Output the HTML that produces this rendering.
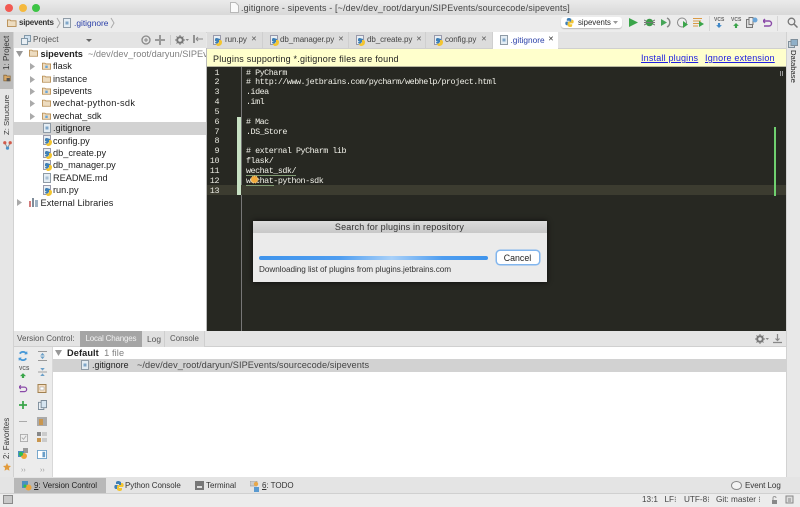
<!DOCTYPE html>
<html><head><meta charset="utf-8"><style>
html,body{margin:0;padding:0;width:800px;height:507px;overflow:hidden;background:#e8e8e8}
#r{position:relative;width:800px;height:507px;overflow:hidden;font:8.7px "Liberation Sans",sans-serif;color:#2c2c2c;filter:blur(.3px)}
#r div,#r svg{position:absolute}
.t{white-space:nowrap;line-height:12px}
.m{font-family:"Liberation Mono",monospace;font-size:8.4px;letter-spacing:-.48px;color:#f2f2ea;white-space:pre;line-height:10px}
.n{font-family:"Liberation Mono",monospace;font-size:8.4px;letter-spacing:-.48px;color:#e8e8e0;width:12px;text-align:right;left:207px;line-height:10px}
.tree{font-size:9.2px;color:#222}
.tab{top:32px;height:16px;background:#dcdcdc;border-right:1px solid #cfcfcf}
.x{font-size:7px;color:#555}
.tt{font-size:8px;color:#444;letter-spacing:-.08px}
.v{writing-mode:vertical-rl;transform:rotate(180deg);white-space:nowrap;font-size:8.1px;color:#333;line-height:11px;width:11px;left:1px}
.bb{font-size:8px;color:#333;top:479.500px;letter-spacing:-.03px}
.st{font-size:8.2px;color:#444;top:494px}
</style></head><body><div id="r">
<!-- title -->
<div style="left:0;top:0;width:800px;height:15px;background:linear-gradient(#ebebeb,#d8d8d8)"></div>
<div style="left:5px;top:3.500px;width:8px;height:8px;border-radius:50%;background:#f25a52"></div>
<div style="left:18.500px;top:3.500px;width:8px;height:8px;border-radius:50%;background:#f5b93d"></div>
<div style="left:32px;top:3.500px;width:8px;height:8px;border-radius:50%;background:#3dc445"></div>
<svg style="left:230px;top:2px" width="9" height="11"><path d="M.5.5h5l3 3v7h-8z" fill="#fafafa" stroke="#b8b8b8"/></svg>
<div class="t" style="left:241px;top:2px;color:#444;font-size:8.900px;letter-spacing:.17px">.gitignore - sipevents - [~/dev/dev_root/daryun/SIPEvents/sourcecode/sipevents]</div>
<!-- nav bar -->
<div style="left:0;top:15px;width:800px;height:17px;background:#ececec;border-bottom:1px solid #d4d4d4"></div>
<svg style="left:7px;top:19px" width="9.500" height="8" viewBox="0 0 11 9"><path d="M.5 1h3l1 1h6v6.500h-10z" fill="#eddcc0" stroke="#b58a4e"/></svg>
<div class="t" style="left:19px;top:17px;font-weight:bold;font-size:8px;letter-spacing:-.25px;color:#333">sipevents</div>
<svg style="left:55.500px;top:17px" width="5" height="12"><path d="M1 1l3 5-3 5" fill="none" stroke="#aaa"/></svg>
<svg style="left:63px;top:18px" width="8" height="10"><path d="M.5.5h7v9h-7z" fill="#e4edf4" stroke="#8f9ba6"/><path d="M2.500 3.500h3v3h-3z" fill="#7fa6c9"/></svg>
<div class="t" style="left:74px;top:17px;color:#2a3fa8;font-size:8.400px">.gitignore</div>
<svg style="left:110px;top:17px" width="5" height="12"><path d="M1 1l3 5-3 5" fill="none" stroke="#aaa"/></svg>
<div style="left:561px;top:17px;width:61px;height:11px;background:#fff;border-radius:3px;box-shadow:0 1px 1px #bbb"></div>
<svg style="left:565px;top:18px" width="9" height="9" viewBox="0 0 10 10"><path d="M5 0c-3 0-3 1-3 2v1h3v1H1c-1 1-1 4 1 4h1V6h3l1-1V1z" fill="#3f7fb5"/><path d="M5 10c3 0 3-1 3-2V7H5V6h4c1-1 1-4-1-4H7v2H4L3 5v4z" fill="#f3c531"/></svg>
<div class="t" style="left:578px;top:17px;font-size:7.800px">sipevents</div>
<svg style="left:613px;top:21px" width="5" height="3"><path d="M0 0h5L2.500 3z" fill="#999"/></svg>
<svg style="left:629px;top:18px" width="9" height="9"><path d="M0 0l9 4.500-9 4.500z" fill="#3aa54a"/></svg>
<svg style="left:644px;top:17px" width="11" height="11"><circle cx="5.500" cy="5.500" r="3.800" fill="#3d9a4a"/><path d="M0 3l2 1M0 8l2-1M11 3L9 4M11 8L9 7M0 5.500h11" stroke="#777"/></svg>
<svg style="left:660px;top:17px" width="11" height="11"><path d="M1 2l6 3.500-6 3.500z" fill="#46a558"/><path d="M7 1a5 5 0 0 1 0 9" stroke="#888" fill="none" stroke-width="1.500"/></svg>
<svg style="left:677px;top:17px" width="11" height="12"><circle cx="5" cy="5.500" r="4.500" fill="#eee" stroke="#888"/><path d="M6 4l5 3.500-5 3.500z" fill="#3aa54a"/></svg>
<svg style="left:693px;top:18px" width="11" height="9"><path d="M0 .5h9M0 3h8M0 5.500h6M0 8h5" stroke="#d99a45"/><path d="M6 3l5 3-5 3z" fill="#3aa54a"/></svg>
<div style="left:709px;top:16px;width:1px;height:15px;background:#d6d6d6"></div>
<div class="t" style="left:714px;top:14px;font-size:5px;font-weight:bold;color:#666">VCS</div>
<svg style="left:716px;top:23px" width="6" height="5" viewBox="0 0 8 7"><path d="M2.500 0h3v3H8L4 7 0 3h2.500z" fill="#3f88c8"/></svg>
<div class="t" style="left:731px;top:14px;font-size:5px;font-weight:bold;color:#666">VCS</div>
<svg style="left:733px;top:23px" width="6" height="5" viewBox="0 0 8 7"><path d="M2.500 7h3V4H8L4 0 0 4h2.500z" fill="#3aa54a"/></svg>
<svg style="left:746px;top:17px" width="12" height="11"><path d="M.5 2.500h6v8h-6z" fill="#ddd" stroke="#777"/><path d="M3 .5h4v7H3z" fill="#eee" stroke="#777"/><circle cx="9" cy="3" r="2.500" fill="#6aa5d8"/></svg>
<svg style="left:763px;top:18px" width="10" height="9"><path d="M2 1L0 3l2 2M0 3h6a2.500 2.500 0 0 1 0 5H1" fill="none" stroke="#8a4aa8" stroke-width="1.400"/></svg>
<div style="left:777px;top:16px;width:1px;height:15px;background:#d6d6d6"></div>
<svg style="left:787px;top:17px" width="11" height="11"><circle cx="4.500" cy="4.500" r="3.300" fill="none" stroke="#777" stroke-width="1.300"/><path d="M7 7l3.500 3.500" stroke="#777" stroke-width="1.500"/></svg>
<!-- left stripe -->
<div style="left:0;top:32px;width:14px;height:461px;background:#e6e6e6;border-right:1px solid #d2d2d2;box-sizing:border-box"></div>
<div style="left:0;top:32px;width:13px;height:57px;background:#bdbdbd"></div>
<div class="v" style="top:38px;height:32px">1: Project</div>
<svg style="left:3px;top:74px" width="8" height="8" viewBox="0 0 9 10"><path d="M.5 1.500h3l1 1h4v6h-8z" fill="#d8a868" stroke="#8a6a3a"/><path d="M4 5h4v4H4z" fill="#555"/></svg>
<div class="v" style="top:96px;height:39px;font-size:7.700px">Z: Structure</div>
<svg style="left:3px;top:140px" width="9" height="10" viewBox="0 0 10 11"><path d="M2 3l3 6 3-6" fill="none" stroke="#888"/><circle cx="2" cy="3" r="1.800" fill="#d05a4a"/><circle cx="8" cy="3" r="1.800" fill="#d05a4a"/><circle cx="5" cy="9" r="1.800" fill="#4a90c8"/></svg>
<div class="v" style="top:418px;height:41px;font-size:7.900px">2: Favorites</div>
<svg style="left:3px;top:463px" width="8" height="8" viewBox="0 0 10 10"><path d="M5 0l1.500 3.300 3.500.4-2.600 2.400.7 3.600L5 8 1.900 9.700l.7-3.600L0 3.700l3.500-.4z" fill="#e29a3a"/></svg>
<!-- project header -->
<div style="left:14px;top:32px;width:192px;height:16px;background:#e4e4e4;border-bottom:1px solid #cfcfcf"></div>
<svg style="left:21px;top:35px" width="10" height="10"><path d="M3.500.5h6v6h-6z" fill="#cfe0ee" stroke="#8298a8"/><path d="M.5 3.500h6v6h-6z" fill="#e8eef3" stroke="#8298a8"/></svg>
<div class="t" style="left:33px;top:33.500px;color:#555;font-size:8.200px">Project</div>
<svg style="left:86px;top:39px" width="6" height="4"><path d="M0 0h6l-3 3z" fill="#666"/></svg>
<svg style="left:141px;top:35px" width="10" height="10"><circle cx="5" cy="5" r="4" fill="none" stroke="#888" stroke-width="1.300"/><path d="M3 5h4M5 3v4" stroke="#888"/></svg>
<svg style="left:155px;top:35px" width="10" height="10"><path d="M5 0v10M0 5h10" stroke="#999" stroke-width="2"/></svg>
<div style="left:170px;top:35px;width:1px;height:10px;background:#ccc"></div>
<svg style="left:175px;top:35px" width="14" height="10"><circle cx="5" cy="5" r="2.800" fill="none" stroke="#777" stroke-width="2"/><path d="M5 0v10M0 5h10M1.500 1.500l7 7M8.500 1.500l-7 7" stroke="#777" stroke-dasharray="1.500 7"/><path d="M10.500 4h3.500l-1.750 2z" fill="#888"/></svg>
<svg style="left:193px;top:35px" width="10" height="10"><path d="M1 0v8" stroke="#777" stroke-width="1.500"/><path d="M3 4h7M3 4l2-2M3 4l2 2" stroke="#888" fill="none"/></svg>
<!-- tree -->
<div style="left:14px;top:48px;width:193px;height:283px;background:#fff;border-right:1px solid #bbb;box-sizing:border-box"></div>
<div style="left:14px;top:122px;width:192px;height:12.500px;background:#d2d2d2"></div>
<svg style="left:16px;top:50px" width="7" height="7"><path d="M0 1h7L3.500 7z" fill="#999"/></svg>
<svg style="left:29px;top:49px" width="9" height="8" viewBox="0 0 11 9"><path d="M.5 1h3l1 1h6v6.500h-10z" fill="#eddcc0" stroke="#b58a4e"/></svg>
<div class="t tree" style="left:40.500px;top:47.500px;overflow:hidden;width:165px"><b>sipevents</b> <span style="color:#808080">&nbsp;~/dev/dev_root/daryun/SIPEvents</span></div>
<svg style="left:30px;top:63px" width="5" height="7"><path d="M0 0l5 3.500L0 7z" fill="#aaa"/></svg>
<svg style="left:30px;top:75.500px" width="5" height="7"><path d="M0 0l5 3.500L0 7z" fill="#aaa"/></svg>
<svg style="left:30px;top:88px" width="5" height="7"><path d="M0 0l5 3.500L0 7z" fill="#aaa"/></svg>
<svg style="left:30px;top:100px" width="5" height="7"><path d="M0 0l5 3.500L0 7z" fill="#aaa"/></svg>
<svg style="left:30px;top:112.500px" width="5" height="7"><path d="M0 0l5 3.500L0 7z" fill="#aaa"/></svg>
<svg style="left:42px;top:62px" width="9" height="8" viewBox="0 0 11 9"><path d="M.5 1h3l1 1h6v6.500h-10z" fill="#eddcc0" stroke="#b58a4e"/><path d="M4 4h3v3H4z" fill="#6aa5d8"/></svg>
<svg style="left:42px;top:74.500px" width="9" height="8" viewBox="0 0 11 9"><path d="M.5 1h3l1 1h6v6.500h-10z" fill="#eddcc0" stroke="#b58a4e"/></svg>
<svg style="left:42px;top:86.500px" width="9" height="8" viewBox="0 0 11 9"><path d="M.5 1h3l1 1h6v6.500h-10z" fill="#eddcc0" stroke="#b58a4e"/><path d="M4 4h3v3H4z" fill="#6aa5d8"/></svg>
<svg style="left:42px;top:99px" width="9" height="8" viewBox="0 0 11 9"><path d="M.5 1h3l1 1h6v6.500h-10z" fill="#eddcc0" stroke="#b58a4e"/></svg>
<svg style="left:42px;top:111.500px" width="9" height="8" viewBox="0 0 11 9"><path d="M.5 1h3l1 1h6v6.500h-10z" fill="#eddcc0" stroke="#b58a4e"/><path d="M4 4h3v3H4z" fill="#6aa5d8"/></svg>
<div class="t tree" style="left:53px;top:60px">flask</div>
<div class="t tree" style="left:53px;top:72.500px">instance</div>
<div class="t tree" style="left:53px;top:85px">sipevents</div>
<div class="t tree" style="left:53px;top:97px;letter-spacing:.3px">wechat-python-sdk</div>
<div class="t tree" style="left:53px;top:109.500px">wechat_sdk</div>
<svg style="left:43px;top:123px" width="8" height="10"><path d="M.5.5h7v9h-7z" fill="#e4edf4" stroke="#8f9ba6"/><path d="M2.500 3.500h3v3h-3z" fill="#7fa6c9"/></svg>
<div class="t tree" style="left:53px;top:122px">.gitignore</div>
<svg style="left:43px;top:135px" width="9" height="11"><path d="M.5.5h7v9h-7z" fill="#e8eef3" stroke="#99a"/><path d="M4 3C2 3 2 4 2 5v1h3c-2 0-3 1-3 2l2 1 3-3V4z" fill="#3f7fb5"/><path d="M6 5c3 0 3 1 3 2 0 3-2 4-4 4-1 0-2-1-2-2l3-1z" fill="#f3c531"/></svg>
<div class="t tree" style="left:53px;top:134.500px">config.py</div>
<svg style="left:43px;top:147.500px" width="9" height="11"><path d="M.5.5h7v9h-7z" fill="#e8eef3" stroke="#99a"/><path d="M4 3C2 3 2 4 2 5v1h3c-2 0-3 1-3 2l2 1 3-3V4z" fill="#3f7fb5"/><path d="M6 5c3 0 3 1 3 2 0 3-2 4-4 4-1 0-2-1-2-2l3-1z" fill="#f3c531"/></svg>
<div class="t tree" style="left:53px;top:147px">db_create.py</div>
<svg style="left:43px;top:160px" width="9" height="11"><path d="M.5.5h7v9h-7z" fill="#e8eef3" stroke="#99a"/><path d="M4 3C2 3 2 4 2 5v1h3c-2 0-3 1-3 2l2 1 3-3V4z" fill="#3f7fb5"/><path d="M6 5c3 0 3 1 3 2 0 3-2 4-4 4-1 0-2-1-2-2l3-1z" fill="#f3c531"/></svg>
<div class="t tree" style="left:53px;top:159px;letter-spacing:-.05px">db_manager.py</div>
<svg style="left:43px;top:172.500px" width="8" height="10"><path d="M.5.5h7v9h-7z" fill="#e4edf4" stroke="#8f9ba6"/><path d="M2.500 3.500h3v3h-3z" fill="#a8c0d4"/></svg>
<div class="t tree" style="left:53px;top:171.500px">README.md</div>
<svg style="left:43px;top:185px" width="9" height="11"><path d="M.5.5h7v9h-7z" fill="#e8eef3" stroke="#99a"/><path d="M4 3C2 3 2 4 2 5v1h3c-2 0-3 1-3 2l2 1 3-3V4z" fill="#3f7fb5"/><path d="M6 5c3 0 3 1 3 2 0 3-2 4-4 4-1 0-2-1-2-2l3-1z" fill="#f3c531"/></svg>
<div class="t tree" style="left:53px;top:184px">run.py</div>
<svg style="left:17px;top:198.500px" width="5" height="7"><path d="M0 0l5 3.500L0 7z" fill="#aaa"/></svg>
<svg style="left:29px;top:198px" width="10" height="9"><path d="M0 3h2v6H0z" fill="#d27c7c"/><path d="M3 0h2v9H3z" fill="#7f8c99"/><path d="M6 2h3v7H6z" fill="#9fb3c4"/></svg>
<div class="t tree" style="left:40.500px;top:196.500px;letter-spacing:.08px">External Libraries</div>
<!-- tabs -->
<div style="left:207px;top:32px;width:579px;height:17px;background:#e4e4e4;border-bottom:1px solid #cfcfcf;box-sizing:border-box"></div>
<div class="tab" style="left:207px;width:55px"></div>
<div class="tab" style="left:263px;width:85px"></div>
<div class="tab" style="left:349px;width:76px"></div>
<div class="tab" style="left:426px;width:66px"></div>
<div style="left:493px;top:32px;width:65px;height:17px;background:#fff"></div>
<svg style="left:213px;top:35px" width="9" height="11"><path d="M.5.5h7v9h-7z" fill="#e8eef3" stroke="#99a"/><path d="M4 3C2 3 2 4 2 5v1h3c-2 0-3 1-3 2l2 1 3-3V4z" fill="#3f7fb5"/><path d="M6 5c3 0 3 1 3 2 0 3-2 4-4 4-1 0-2-1-2-2l3-1z" fill="#f3c531"/></svg>
<div class="t tt" style="left:225px;top:33.500px">run.py</div><div class="t x" style="left:251px;top:33.500px">✕</div>
<svg style="left:270px;top:35px" width="9" height="11"><path d="M.5.5h7v9h-7z" fill="#e8eef3" stroke="#99a"/><path d="M4 3C2 3 2 4 2 5v1h3c-2 0-3 1-3 2l2 1 3-3V4z" fill="#3f7fb5"/><path d="M6 5c3 0 3 1 3 2 0 3-2 4-4 4-1 0-2-1-2-2l3-1z" fill="#f3c531"/></svg>
<div class="t tt" style="left:280px;top:33.500px">db_manager.py</div><div class="t x" style="left:338px;top:33.500px">✕</div>
<svg style="left:356px;top:35px" width="9" height="11"><path d="M.5.5h7v9h-7z" fill="#e8eef3" stroke="#99a"/><path d="M4 3C2 3 2 4 2 5v1h3c-2 0-3 1-3 2l2 1 3-3V4z" fill="#3f7fb5"/><path d="M6 5c3 0 3 1 3 2 0 3-2 4-4 4-1 0-2-1-2-2l3-1z" fill="#f3c531"/></svg>
<div class="t tt" style="left:367px;top:33.500px">db_create.py</div><div class="t x" style="left:416px;top:33.500px">✕</div>
<svg style="left:433.500px;top:35px" width="9" height="11"><path d="M.5.5h7v9h-7z" fill="#e8eef3" stroke="#99a"/><path d="M4 3C2 3 2 4 2 5v1h3c-2 0-3 1-3 2l2 1 3-3V4z" fill="#3f7fb5"/><path d="M6 5c3 0 3 1 3 2 0 3-2 4-4 4-1 0-2-1-2-2l3-1z" fill="#f3c531"/></svg>
<div class="t tt" style="left:445px;top:33.500px">config.py</div><div class="t x" style="left:481px;top:33.500px">✕</div>
<svg style="left:500px;top:35px" width="8" height="10"><path d="M.5.5h7v9h-7z" fill="#e4edf4" stroke="#8f9ba6"/><path d="M2.500 3.500h3v3h-3z" fill="#7fa6c9"/></svg>
<div class="t" style="left:510.500px;top:33.500px;font-size:8.300px;color:#2a3fa8">.gitignore</div><div class="t x" style="left:548px;top:33.500px;color:#333">✕</div>
<!-- notification -->
<div style="left:207px;top:49px;width:579px;height:18px;background:#ffffcc;border-bottom:1px solid #b8b8a0;box-sizing:border-box"></div>
<div class="t" style="left:213px;top:52.500px;font-size:9px;letter-spacing:.21px;color:#222">Plugins supporting *.gitignore files are found</div>
<div class="t" style="left:641px;top:52px;font-size:9px;letter-spacing:.18px;color:#2020e0;text-decoration:underline">Install plugins</div>
<div class="t" style="left:705px;top:52px;font-size:9px;letter-spacing:.2px;color:#2020e0;text-decoration:underline">Ignore extension</div>
<!-- editor -->
<div style="left:207px;top:67px;width:579px;height:264px;background:#272822"></div>
<div style="left:241px;top:67px;width:1px;height:264px;background:#777"></div>
<div style="left:207px;top:184.800px;width:579px;height:10px;background:#3c3c30"></div>
<div style="left:237px;top:117px;width:4px;height:78px;background:#c8e2c4"></div>
<div style="left:774px;top:127px;width:2px;height:69px;background:#6fd06f"></div>
<div style="left:780px;top:71px;width:1px;height:5px;background:#999;box-shadow:2px 0 0 #999"></div>
<div class="n" style="top:67.500px">1</div><div class="n" style="top:77.300px">2</div><div class="n" style="top:87.200px">3</div><div class="n" style="top:97px">4</div><div class="n" style="top:106.800px">5</div><div class="n" style="top:116.700px">6</div><div class="n" style="top:126.500px">7</div><div class="n" style="top:136.300px">8</div><div class="n" style="top:146.200px">9</div><div class="n" style="top:156px">10</div><div class="n" style="top:165.800px">11</div><div class="n" style="top:175.700px">12</div><div class="n" style="top:185.500px">13</div>
<div class="m" style="left:246px;top:67.500px"># PyCharm</div>
<div class="m" style="left:246px;top:77.300px"># http://www.jetbrains.com/pycharm/webhelp/project.html</div>
<div class="m" style="left:246px;top:87.200px">.idea</div>
<div class="m" style="left:246px;top:97px">.iml</div>
<div class="m" style="left:246px;top:116.700px"># Mac</div>
<div class="m" style="left:246px;top:126.500px">.DS_Store</div>
<div class="m" style="left:246px;top:146.200px"># external PyCharm lib</div>
<div class="m" style="left:246px;top:156px">flask/</div>
<div class="m" style="left:246px;top:165.800px">wechat_sdk/</div>
<div class="m" style="left:246px;top:175.700px">wechat-python-sdk</div>
<div style="left:246px;top:175px;width:50px;height:1px;background:#7f9a72"></div>
<div style="left:246px;top:184.500px;width:28px;height:1px;background:#7f9a72"></div>
<svg style="left:250px;top:175px" width="9" height="9"><circle cx="4.500" cy="4.500" r="3.500" fill="#f2a93a" stroke="#f6cf85" stroke-dasharray="1 1"/></svg>
<!-- dialog -->
<div style="left:252.500px;top:220.500px;width:294px;height:61.500px;background:#ebebeb;box-shadow:0 0 5px #0c0c0c"></div>
<div style="left:252.500px;top:220.500px;width:294px;height:12px;background:linear-gradient(#dcdcdc,#c8c8c8)"></div>
<div class="t" style="left:252.500px;top:221px;width:294px;text-align:center;font-size:9px;letter-spacing:.16px;color:#333">Search for plugins in repository</div>
<div style="left:259px;top:256px;width:229px;height:4px;border-radius:2px;background:linear-gradient(90deg,#3f94ec 0,#4e9df0 35%,#a8d0f8 58%,#4e9df0 80%,#3f94ec 100%)"></div>
<div style="left:496.500px;top:251px;width:42px;height:13px;background:#fff;border-radius:3px;box-shadow:0 0 0 1.500px #82b6ee"></div>
<div class="t" style="left:496.500px;top:251.500px;width:42px;text-align:center;font-size:8.800px;color:#222">Cancel</div>
<div class="t" style="left:259px;top:263.500px;font-size:8.200px;letter-spacing:-.05px;color:#333">Downloading list of plugins from plugins.jetbrains.com</div>
<!-- right stripe -->
<div style="left:786px;top:32px;width:14px;height:461px;background:#e8e8e8;border-left:1px solid #d2d2d2;box-sizing:border-box"></div>
<svg style="left:788px;top:39px" width="10" height="9"><path d="M.5 2.500h6v6h-6z" fill="#cfd8df" stroke="#7f8f9b"/><path d="M3 .5h6.500v6H3z" fill="#8fb0c8" stroke="#7f8f9b"/></svg>
<div style="left:788px;top:50px;writing-mode:vertical-rl;font-size:7.700px;line-height:10px;color:#222;white-space:nowrap">Database</div>
<!-- VC panel -->
<div style="left:14px;top:331px;width:772px;height:16px;background:#e4e4e4;border-bottom:1px solid #d0d0d0;box-sizing:border-box"></div>
<div class="t" style="left:17px;top:332.500px;color:#555;font-size:8.100px">Version Control:</div>
<div style="left:80px;top:331px;width:62px;height:16px;background:#a5a5a5"></div>
<div class="t" style="left:85.500px;top:332.500px;color:#f2f2f2;font-size:8px;letter-spacing:-.2px">Local Changes</div>
<div style="left:142px;top:331px;width:23px;height:16px;background:#e0e0e0;border-right:1px solid #cfcfcf;box-sizing:border-box"></div>
<div class="t" style="left:147px;top:332.500px;color:#555;font-size:8.400px">Log</div>
<div style="left:165px;top:331px;width:40px;height:16px;background:#e0e0e0;border-right:1px solid #cfcfcf;box-sizing:border-box"></div>
<div class="t" style="left:170px;top:332.500px;color:#555;font-size:7.900px">Console</div>
<svg style="left:755px;top:334px" width="14" height="10"><circle cx="5" cy="5" r="2.800" fill="none" stroke="#777" stroke-width="2"/><path d="M5 0v10M0 5h10M1.500 1.500l7 7M8.500 1.500l-7 7" stroke="#777" stroke-dasharray="1.500 7"/><path d="M10.500 4h3.500l-1.750 2z" fill="#888"/></svg>
<svg style="left:773px;top:334px" width="9" height="10"><path d="M4.500 0v6M2.500 4.500l2 2 2-2M0 8.500h9" fill="none" stroke="#888" stroke-width="1.200"/></svg>
<div style="left:14px;top:347px;width:39px;height:130px;background:#ececec;border-right:1px solid #d8d8d8;box-sizing:border-box"></div>
<div style="left:53px;top:347px;width:733px;height:130px;background:#fff"></div>
<div style="left:53px;top:359px;width:733px;height:12.500px;background:#d2d2d2"></div>
<svg style="left:55px;top:350px" width="7" height="6"><path d="M0 0h7L3.500 6z" fill="#999"/></svg>
<div class="t" style="left:67px;top:346.500px;font-size:9.200px;letter-spacing:.1px;color:#222"><b>Default</b> <span style="color:#808080">&nbsp;1 file</span></div>
<svg style="left:81px;top:360px" width="8" height="10"><path d="M.5.5h7v9h-7z" fill="#e4edf4" stroke="#8f9ba6"/><path d="M2.500 3.500h3v3h-3z" fill="#7fa6c9"/></svg>
<div class="t" style="left:92px;top:359px;font-size:8.900px;color:#222">.gitignore</div>
<div class="t" style="left:137px;top:359px;font-size:9.200px;letter-spacing:.07px;color:#444">~/dev/dev_root/daryun/SIPEvents/sourcecode/sipevents</div>
<!-- VC toolbar icons -->
<svg style="left:18px;top:351px" width="10" height="10" viewBox="0 0 11 11"><path d="M9 3a4 4 0 0 0-7 0M2 8a4 4 0 0 0 7 0" fill="none" stroke="#4a9ad8" stroke-width="2"/><path d="M7 4l3.500-.5L10 0zM4 7L.5 7.500 1 11z" fill="#4a9ad8"/></svg>
<svg style="left:37.500px;top:351px" width="9" height="10" viewBox="0 0 10 11"><path d="M0 .5h10M0 10.500h10" stroke="#999"/><path d="M5 2l2.500 3h-5zM5 9l2.500-3h-5z" fill="#6a9fc8"/></svg>
<div class="t" style="left:19px;top:362.500px;font-size:5px;font-weight:bold;color:#666">VCS</div>
<svg style="left:20px;top:372.500px" width="6" height="5.500" viewBox="0 0 8 7"><path d="M2.500 7h3V4H8L4 0 0 4h2.500z" fill="#3aa54a"/></svg>
<svg style="left:37.500px;top:367px" width="9" height="10" viewBox="0 0 10 11"><path d="M0 5.500h10" stroke="#999"/><path d="M5 4L2.500 1h5zM5 7l2.500 3h-5z" fill="#6a9fc8"/></svg>
<svg style="left:19px;top:384px" width="9" height="9" viewBox="0 0 10 9"><path d="M2 1L0 3l2 2M0 3h6a2.500 2.500 0 0 1 0 5H1" fill="none" stroke="#8a4aa8" stroke-width="1.400"/></svg>
<svg style="left:37px;top:384px" width="10" height="9"><path d="M1 .5h8v8H1z" fill="#f3dcc0" stroke="#a08050"/><path d="M3 3h4v3H3z" fill="#fff" stroke="#999" stroke-width=".5"/></svg>
<svg style="left:19px;top:401px" width="8" height="8" viewBox="0 0 10 10"><path d="M5 0v10M0 5h10" stroke="#3aa54a" stroke-width="2.200"/></svg>
<svg style="left:38px;top:400px" width="9" height="10" viewBox="0 0 10 11"><path d="M.5 2.500h6v8h-6z" fill="#e8eef3" stroke="#7a8a98"/><path d="M3.500.5h6v8h-6z" fill="#d5e4f0" stroke="#7a8a98"/></svg>
<div style="left:19px;top:420.500px;width:8px;height:1.500px;background:#aaa"></div>
<svg style="left:37px;top:416.500px" width="10" height="9"><path d="M0 0h10v10H0z" fill="#aaa"/><path d="M2 2h4v6H2z" fill="#c9964e"/></svg>
<svg style="left:19.500px;top:433.500px" width="8" height="8" viewBox="0 0 9 9"><path d="M.5.5h8v8h-8z" fill="#eee" stroke="#aaa"/><path d="M2 4l2 2 3-4" fill="none" stroke="#aaa"/></svg>
<svg style="left:37px;top:432px" width="10" height="10"><path d="M0 0h4v4H0z" fill="#888"/><path d="M0 6h4v4H0z" fill="#c9964e"/><path d="M5 1h5M5 3h5M5 7h5M5 9h5" stroke="#aaa"/></svg>
<svg style="left:18px;top:448px" width="10" height="11"><path d="M5 0h5v5H5z" fill="#999"/><path d="M0 3h6v6H0z" fill="#4a8fc0"/><circle cx="6" cy="8" r="3" fill="#eda43a"/><circle cx="3" cy="6" r="2" fill="#2fc04a"/></svg>
<svg style="left:37px;top:449.500px" width="10" height="9" viewBox="0 0 11 10"><path d="M.5.5h10v9H.5z" fill="#fff" stroke="#6a9fc8"/><path d="M6 2h3v6H6z" fill="#6a9fc8"/></svg>
<div class="t" style="left:21px;top:465px;font-size:7px;color:#999">››</div>
<div class="t" style="left:40px;top:465px;font-size:7px;color:#999">››</div>
<!-- bottom tool bar -->
<div style="left:0;top:477px;width:800px;height:16.500px;background:#e4e4e4;border-bottom:1px solid #d0d0d0;box-sizing:border-box"></div>
<div style="left:14px;top:478px;width:91.500px;height:15px;background:#b8b8b8"></div>
<svg style="left:22px;top:481px" width="10" height="10"><path d="M0 0h6v7H0z" fill="#4a8fc0"/><circle cx="6.500" cy="6.500" r="3" fill="#eda43a"/><circle cx="3" cy="5" r="1.500" fill="#2fc04a"/></svg>
<div class="t bb" style="left:34px;color:#222"><u>9</u>: Version Control</div>
<svg style="left:114px;top:481px" width="10" height="10"><path d="M5 0c-3 0-3 1-3 2v1h3v1H1c-1 1-1 4 1 4h1V6h3l1-1V1z" fill="#3f7fb5"/><path d="M5 10c3 0 3-1 3-2V7H5V6h4c1-1 1-4-1-4H7v2H4L3 5v4z" fill="#f3c531"/></svg>
<div class="t bb" style="left:125px;letter-spacing:-.05px">Python Console</div>
<svg style="left:195px;top:481px" width="9" height="9"><path d="M0 0h9v9H0z" fill="#777"/><path d="M2 5h5v2H2z" fill="#ddd"/></svg>
<div class="t bb" style="left:206px">Terminal</div>
<svg style="left:250px;top:481px" width="11" height="11"><path d="M0 0h7v5H0z" fill="#ccc" stroke="#888" stroke-width=".5"/><circle cx="6" cy="3" r="2.200" fill="#e8a84a"/><path d="M4 6h5v5H4z" fill="#5a9ad0"/></svg>
<div class="t bb" style="left:262px"><u>6</u>: TODO</div>
<svg style="left:731px;top:481px" width="11" height="10"><ellipse cx="5.500" cy="4.500" rx="5" ry="4" fill="#f3f3f3" stroke="#888"/></svg>
<div class="t bb" style="left:745px">Event Log</div>
<!-- status bar -->
<div style="left:0;top:493.500px;width:800px;height:13.500px;background:#ececec"></div>
<div style="left:3px;top:495px;width:10px;height:9px;background:#c8c8c8;border:1px solid #8a8a8a;box-sizing:border-box"></div>
<div class="t st" style="left:642px">13:1</div>
<div class="t st" style="left:664.500px">LF⁝</div>
<div class="t st" style="left:684px">UTF-8⁝</div>
<div class="t st" style="left:716px">Git: master ⁝</div>
<svg style="left:771px;top:496px" width="7" height="8"><path d="M1 4h5v4H1z" fill="#888"/><path d="M2 4V2a1.500 1.500 0 0 1 3 0" fill="none" stroke="#999"/></svg>
<svg style="left:785px;top:495px" width="9" height="10"><path d="M1 1h7v7H1z" fill="#ddd" stroke="#888"/><path d="M3 4h3M3 6h3" stroke="#888"/></svg>
</div></body></html>
